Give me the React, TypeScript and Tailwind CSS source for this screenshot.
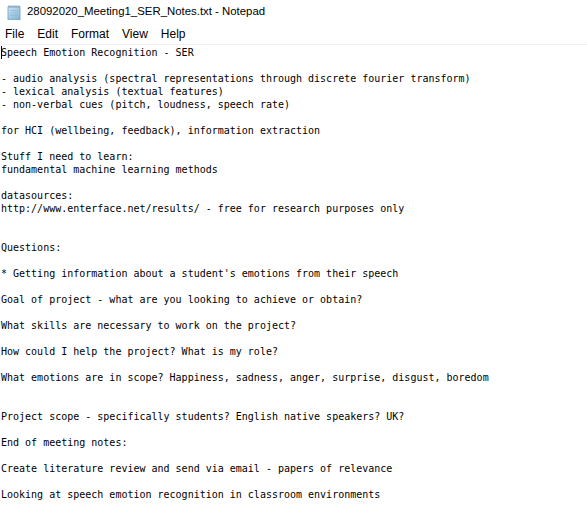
import React from 'react';

const lines = [
  'Speech Emotion Recognition - SER',
  '',
  '- audio analysis (spectral representations through discrete fourier transform)',
  '- lexical analysis (textual features)',
  '- non-verbal cues (pitch, loudness, speech rate)',
  '',
  'for HCI (wellbeing, feedback), information extraction',
  '',
  'Stuff I need to learn:',
  'fundamental machine learning methods',
  '',
  'datasources:',
  'http://www.enterface.net/results/ - free for research purposes only',
  '',
  '',
  'Questions:',
  '',
  "* Getting information about a student's emotions from their speech",
  '',
  'Goal of project - what are you looking to achieve or obtain?',
  '',
  'What skills are necessary to work on the project?',
  '',
  'How could I help the project? What is my role?',
  '',
  'What emotions are in scope? Happiness, sadness, anger, surprise, disgust, boredom',
  '',
  '',
  'Project scope - specifically students? English native speakers? UK?',
  '',
  'End of meeting notes:',
  '',
  'Create literature review and send via email - papers of relevance',
  '',
  'Looking at speech emotion recognition in classroom environments',
];

const NotepadIcon = () => (
  <svg width="14" height="15" viewBox="0 0 14 15">
    <defs>
      <linearGradient id="pad" x1="0" y1="0" x2="1" y2="1">
        <stop offset="0" stopColor="#cfe6f5" />
        <stop offset="1" stopColor="#7fb2d6" />
      </linearGradient>
    </defs>
    <rect x="1" y="2" width="12" height="13" fill="url(#pad)" stroke="#6a9cc2" strokeWidth="0.8" />
    <line x1="3" y1="5.5" x2="11" y2="5.5" stroke="#8fb7d6" strokeWidth="0.8" />
    <line x1="3" y1="8" x2="11" y2="8" stroke="#8fb7d6" strokeWidth="0.8" />
    <line x1="3" y1="10.5" x2="11" y2="10.5" stroke="#8fb7d6" strokeWidth="0.8" />
    <line x1="3" y1="13" x2="11" y2="13" stroke="#8fb7d6" strokeWidth="0.8" />
    <path d="M2 2 V0.5 M4 2 V0.5 M6 2 V0.5 M8 2 V0.5 M10 2 V0.5 M12 2 V0.5" stroke="#6d8294" strokeWidth="1" />
  </svg>
);

export default function App() {
  return (
    <div className="w-[587px] h-[506px] bg-white overflow-hidden flex flex-col">
      {/* Title bar */}
      <div className="h-[24px] flex items-center pl-[7px] gap-[6px]">
        <NotepadIcon />
        <span className="text-[11.4px] text-black font-['Liberation_Sans',sans-serif]">
          28092020_Meeting1_SER_Notes.txt - Notepad
        </span>
      </div>

      {/* Menu */}
      <div className="h-[20px] flex items-center pl-[5px] gap-[13px] text-[12px] text-black font-['Liberation_Sans',sans-serif]">
        <span>File</span>
        <span>Edit</span>
        <span>Format</span>
        <span>View</span>
        <span>Help</span>
      </div>
      <div className="h-[1px] bg-[#f0f0f0]" />

      {/* Text area */}
      <div className="relative pt-[1px] pl-[1px] font-['DejaVu_Sans_Mono',monospace] text-[10px] leading-[13px] text-black whitespace-pre">
        <div className="absolute left-[1px] top-[1px] w-[1px] h-[13px] bg-black" />
        {lines.map((l, i) => (
          <div key={i} className="h-[13px]">{l}</div>
        ))}
      </div>
    </div>
  );
}
